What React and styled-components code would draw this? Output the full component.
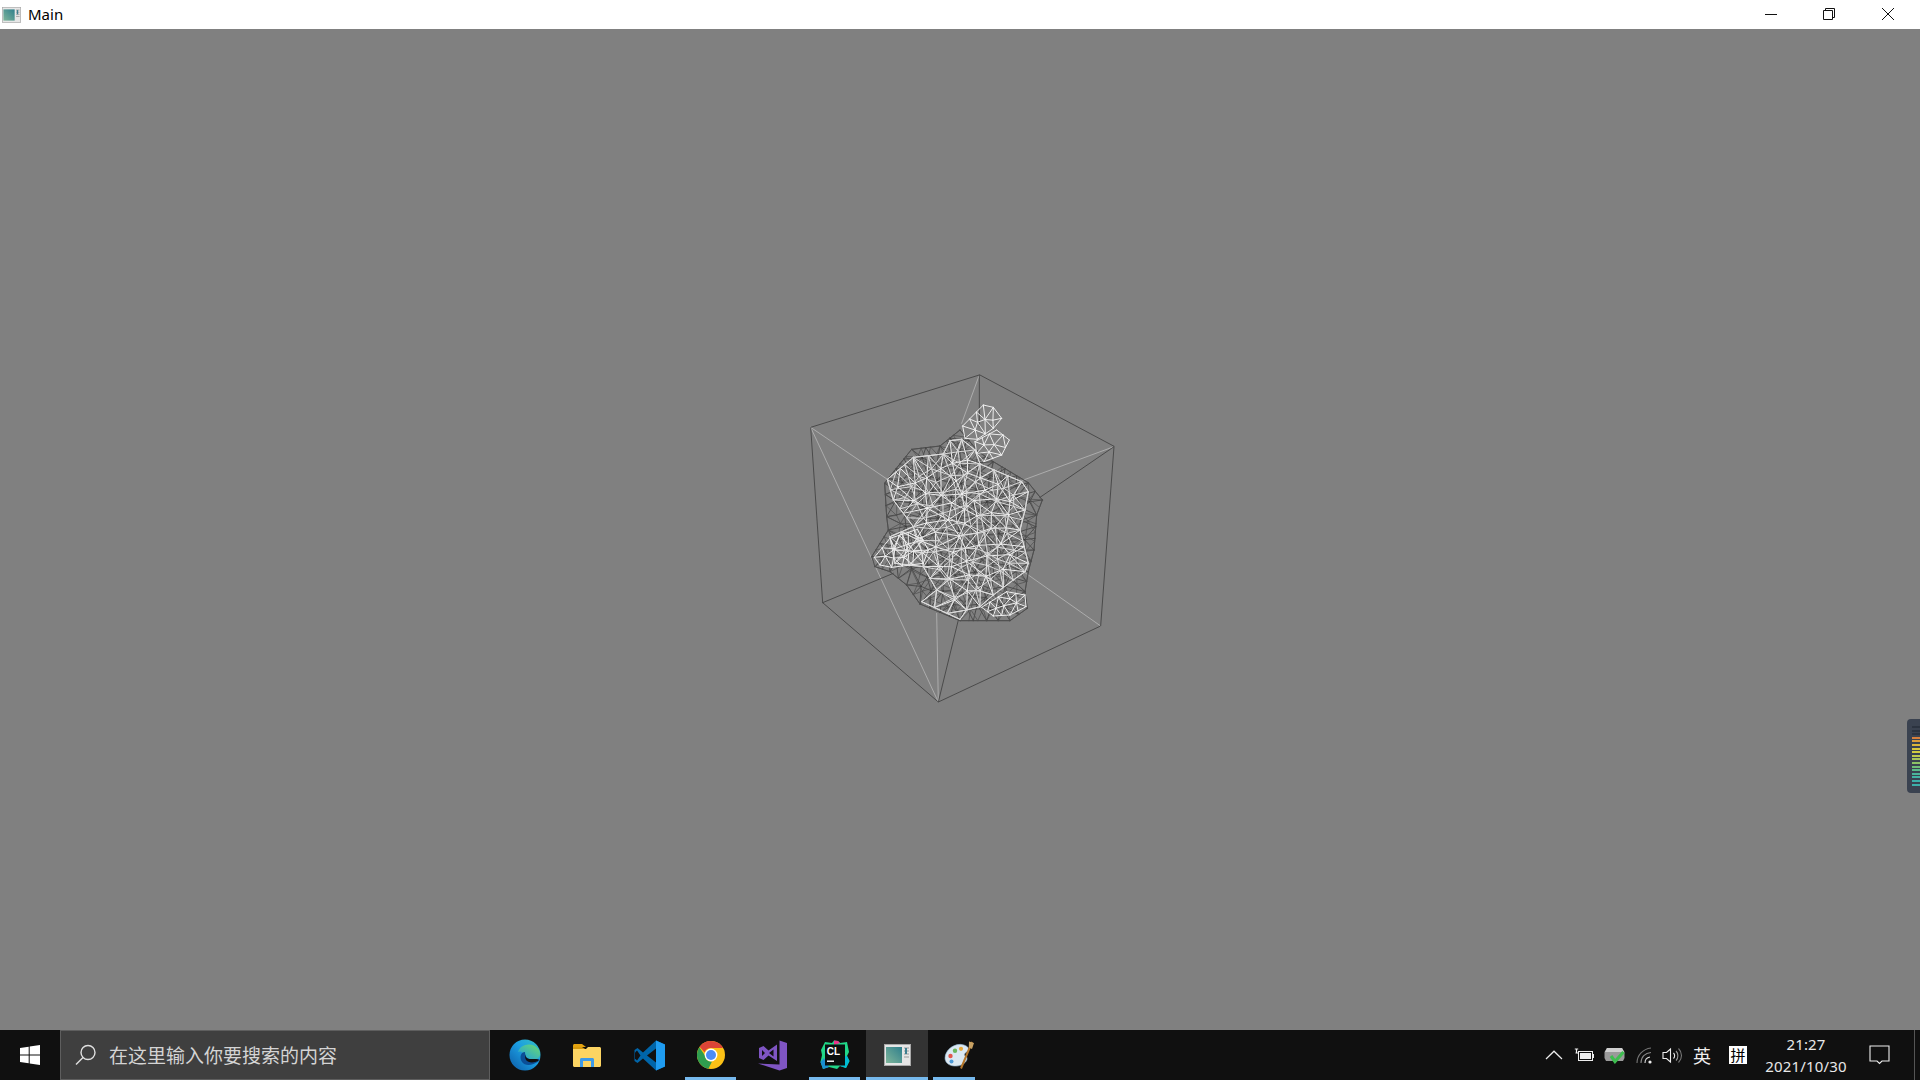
import React from 'react';
import styled, { createGlobalStyle } from 'styled-components';

const GlobalStyle = createGlobalStyle`
	html, body {
		margin: 0;
		padding: 0;
		background: #808080;
		overflow: hidden;
	}
`;

const UI_FONT = `"Noto Sans", "Noto Sans CJK SC", sans-serif`;

/**
 * Window frame
 */
const Page = styled.div`
	width: 1920px;
	height: 1080px;
	display: flex;
	flex-direction: column;
	position: relative;
	font-family: ${UI_FONT};
`;

const TitleBar = styled.div`
	height: 29px;
	flex: none;
	background: #fff;
	display: flex;
	align-items: center;
	padding-left: 2px;
	padding-right: 3px;
`;

const TitleText = styled.span`
	margin-left: 7px;
	font-size: 15px;
	color: #000;
	line-height: 29px;
`;

const WindowControls = styled.div`
	margin-left: auto;
	display: flex;
	height: 100%;
`;

const WindowButton = styled.div`
	width: 58.5px;
	display: flex;
	align-items: center;
	justify-content: center;
	padding-bottom: 2px;
	box-sizing: border-box;
`;

const Viewport = styled.div`
	flex: 1;
	background: #808080;
	display: flex;
	align-items: center;
	justify-content: center;
	padding-top: 11px;
`;

const MeshCanvas = styled.svg`
	display: block;
	width: 360px;
	height: 370px;
`;

const SideMeter = styled.div`
	position: absolute;
	right: 0;
	top: 719px;
	width: 13px;
	height: 74px;
	box-sizing: border-box;
	padding: 7px 0 0 5px;
	background: #3a4250;
	border-radius: 4px 0 0 4px;
	display: flex;
	flex-direction: column;
	gap: 1.6px;
`;

const MeterBar = styled.div`
	height: 2px;
	background: ${props => props.$color};
`;

/**
 * Taskbar
 */
const Taskbar = styled.div`
	height: 50px;
	flex: none;
	background: #101010;
	display: flex;
	color: #fff;
`;

const StartButton = styled.div`
	width: 60px;
	display: flex;
	align-items: center;
	justify-content: center;
`;

const SearchBox = styled.div`
	width: 430px;
	box-sizing: border-box;
	background: #3f3f3f;
	border: 1px solid #5e5e5e;
	display: flex;
	align-items: center;
	padding-left: 14px;
	padding-bottom: 1px;
	color: #d4d4d4;
	font-size: 19px;
	font-family: "Noto Sans CJK SC", sans-serif;
`;

const SearchText = styled.span`
	margin-left: 12px;
`;

const AppList = styled.div`
	display: flex;
	margin-left: 4px;
`;

const AppItem = styled.div`
	width: 62px;
	flex: none;
	position: relative;
	display: flex;
	align-items: center;
	justify-content: center;
	background: ${props => props.$active ? '#333' : 'transparent'};
`;

const RunningLine = styled.div`
	position: absolute;
	bottom: 0;
	left: ${props => props.$inset}px;
	right: ${props => props.$insetRight}px;
	height: 3px;
	background: #76b9ed;
`;

const Tray = styled.div`
	margin-left: auto;
	display: flex;
	align-items: center;
	height: 100%;
`;

const TraySlot = styled.div`
	width: ${props => props.$width}px;
	display: flex;
	align-items: center;
	justify-content: center;
	height: 100%;
`;

const ImeLabel = styled.span`
	font-family: "Noto Sans CJK SC", sans-serif;
	font-size: 18px;
	color: #eee;
`;

const ImeBox = styled.span`
	width: 18px;
	height: 18px;
	background: #fff;
	color: #000;
	font-family: "Noto Sans CJK SC", sans-serif;
	font-size: 15px;
	line-height: 18px;
	text-align: center;
`;

const Clock = styled.div`
	width: 96px;
	text-align: center;
	color: #e8e8e8;
	font-size: 15px;
	line-height: 22.5px;
	letter-spacing: 0.15px;
`;

const DesktopEdge = styled.div`
	width: 1px;
	height: 100%;
	margin-left: 10px;
	margin-right: 5px;
	background: #555;
`;

/**
 * Wireframe, in a coordinate system of 3 units per pixel
 */
const BODY_BACK = [[325, 385], [395, 298], [480, 288], [540, 240], [595, 305], [640, 335], [745, 398], [787, 450], [770, 495], [762, 600], [745, 665], [735, 725], [742, 775], [690, 812], [620, 812], [540, 812], [420, 762], [380, 705], [330, 665], [285, 650], [275, 620], [300, 580], [325, 540], [320, 500], [314, 400]];
const BODY_FRONT = [[322, 388], [400, 322], [490, 312], [510, 272], [545, 268], [585, 300], [600, 342], [725, 395], [745, 425], [735, 480], [720, 540], [745, 640], [735, 665], [700, 690], [640, 735], [600, 770], [560, 780], [540, 808], [425, 755], [470, 720], [430, 650], [345, 640], [330, 560], [400, 530], [340, 450]];
const EAR_TOP = [[548, 228], [610, 165], [640, 172], [665, 205], [640, 235], [592, 268], [555, 265]];
const EAR_LOW = [[585, 275], [650, 240], [688, 270], [665, 315], [612, 335], [590, 310]];
const PAW = [[283, 622], [330, 565], [412, 538], [445, 600], [430, 640], [335, 652], [300, 645]];
const FOOT = [[605, 772], [680, 725], [735, 735], [738, 770], [690, 795], [640, 798]];

function makeRandom(seed) {
	let s = seed;
	return () => {
		s = (s + 0x6d2b79f5) | 0;
		let t = Math.imul(s ^ (s >>> 15), 1 | s);
		t = (t + Math.imul(t ^ (t >>> 7), 61 | t)) ^ t;
		return ((t ^ (t >>> 14)) >>> 0) / 4294967296;
	};
}

function inside(poly, x, y) {
	let hit = false;
	for (let i = 0, j = poly.length - 1; i < poly.length; j = i++) {
		const [xi, yi] = poly[i];
		const [xj, yj] = poly[j];
		if ((yi > y) !== (yj > y) && x < ((xj - xi) * (y - yi)) / (yj - yi) + xi) hit = !hit;
	}
	return hit;
}

function inCircumcircle(p, a, b, c) {
	const ax = a[0] - p[0], ay = a[1] - p[1];
	const bx = b[0] - p[0], by = b[1] - p[1];
	const cx = c[0] - p[0], cy = c[1] - p[1];
	const det = (ax * ax + ay * ay) * (bx * cy - cx * by)
		- (bx * bx + by * by) * (ax * cy - cx * ay)
		+ (cx * cx + cy * cy) * (ax * by - bx * ay);
	const orient = (b[0] - a[0]) * (c[1] - a[1]) - (b[1] - a[1]) * (c[0] - a[0]);
	return orient > 0 ? det > 0 : det < 0;
}

// Bowyer-Watson, good enough for a couple of hundred points
function triangulate(points) {
	const all = points.concat([[-5000, -5000], [7000, -5000], [540, 7000]]);
	const n = points.length;
	let tris = [[n, n + 1, n + 2]];
	points.forEach((p, index) => {
		const bad = [];
		const good = [];
		tris.forEach((t) => {
			(inCircumcircle(p, all[t[0]], all[t[1]], all[t[2]]) ? bad : good).push(t);
		});
		const edges = {};
		bad.forEach((t) => {
			[[t[0], t[1]], [t[1], t[2]], [t[2], t[0]]].forEach(([a, b]) => {
				const key = a < b ? `${a},${b}` : `${b},${a}`;
				edges[key] = (edges[key] || 0) + 1;
			});
		});
		Object.keys(edges).forEach((key) => {
			if (edges[key] === 1) {
				const [a, b] = key.split(',').map(Number);
				good.push([a, b, index]);
			}
		});
		tris = good;
	});
	return tris.filter(t => t.every(i => i < n));
}

// random points inside an outline joined up into triangles
function meshPath(poly, spacing, seed) {
	const random = makeRandom(seed);
	const points = [];
	poly.forEach((a, i) => {
		const b = poly[(i + 1) % poly.length];
		const steps = Math.max(1, Math.round(Math.hypot(b[0] - a[0], b[1] - a[1]) / spacing));
		for (let s = 0; s < steps; s++) {
			points.push([a[0] + ((b[0] - a[0]) * s) / steps, a[1] + ((b[1] - a[1]) * s) / steps]);
		}
	});
	const xs = poly.map(p => p[0]);
	const ys = poly.map(p => p[1]);
	const minX = Math.min(...xs), maxX = Math.max(...xs);
	const minY = Math.min(...ys), maxY = Math.max(...ys);
	for (let tries = 0; tries < 4000; tries++) {
		const x = minX + random() * (maxX - minX);
		const y = minY + random() * (maxY - minY);
		if (!inside(poly, x, y)) continue;
		if (points.some(p => Math.hypot(p[0] - x, p[1] - y) < spacing * 0.85)) continue;
		points.push([x, y]);
	}
	const seen = {};
	let d = '';
	triangulate(points).forEach((t) => {
		const cx = (points[t[0]][0] + points[t[1]][0] + points[t[2]][0]) / 3;
		const cy = (points[t[0]][1] + points[t[1]][1] + points[t[2]][1]) / 3;
		if (!inside(poly, cx, cy)) return;
		[[t[0], t[1]], [t[1], t[2]], [t[2], t[0]]].forEach(([a, b]) => {
			const key = a < b ? `${a},${b}` : `${b},${a}`;
			if (seen[key]) return;
			seen[key] = true;
			d += `M${points[a][0].toFixed(1)} ${points[a][1].toFixed(1)}L${points[b][0].toFixed(1)} ${points[b][1].toFixed(1)}`;
		});
	});
	return d;
}

const BACK_LAYERS = [
	meshPath(BODY_BACK, 36, 11),
	meshPath(BODY_BACK, 30, 12),
];

const FRONT_LAYERS = [
	meshPath(BODY_FRONT, 44, 21),
	meshPath(BODY_FRONT, 40, 22),
];

const DETAIL_LAYERS = [
	meshPath(EAR_TOP, 28, 31),
	meshPath(EAR_LOW, 26, 32),
	meshPath(PAW, 30, 33),
	meshPath(FOOT, 26, 34),
];

const METER = ['#2b3340', '#2b3340', '#2b3340', '#d9803c', '#dc9c3a', '#dcb43a', '#d9c63c', '#d2cc40', '#bfca4c', '#a8c659', '#8cc265', '#6fbd78', '#58b98a', '#4bb59a', '#41b3a4', '#3cb0aa', '#3cb0aa'];

function BunnyMesh() {
	const dark = '#3c3c3c';
	const light = '#b8b8b8';
	return (
		<MeshCanvas viewBox="0 0 1080 1110" aria-hidden="true">
			<g fill="none" strokeLinecap="round" strokeLinejoin="round">
				{/* hidden edges of the box */}
				<path d="M598 75L545 220M92 232L325 390M1002 290L725 392M92 232L475 1056M475 1056L470 790M962 828L735 668" stroke={light} strokeWidth="2.4" />
				<path d="M598 75V230M1002 290L780 442M128 758L340 670M475 1056L535 810" stroke={dark} strokeWidth="2.4" />
				{/* far side of the model */}
				{BACK_LAYERS.map((d, i) => <path key={i} d={d} stroke={i === 1 ? '#505050' : '#3a3a3a'} strokeWidth="2.2" />)}
				{/* near side of the model */}
				{FRONT_LAYERS.map((d, i) => <path key={i} d={d} stroke={i === 1 ? '#d8d8d8' : '#f0f0f0'} strokeWidth="3" />)}
				{DETAIL_LAYERS.map((d, i) => <path key={i} d={d} stroke="#eeeeee" strokeWidth="3" />)}
				{/* visible edges of the box */}
				<path d="M598 75L92 232L128 758L475 1056L962 828L1002 290Z" stroke={dark} strokeWidth="2.4" />
			</g>
		</MeshCanvas>
	);
}

/**
 * Icons
 */
function WindowIcon({ width, height }) {
	return (
		<svg width={width} height={height} viewBox="0 0 27 22" style={{ display: 'block' }}>
			<defs>
				<linearGradient id="winPane" x1="0" y1="1" x2="1" y2="0">
					<stop offset="0" stopColor="#7fb59a" />
					<stop offset="1" stopColor="#2f7f8c" />
				</linearGradient>
			</defs>
			<rect x="0.5" y="0.5" width="26" height="21" fill="#e6e6e6" stroke="#a9a9a9" />
			<rect x="2" y="3" width="16" height="16" fill="url(#winPane)" />
			<path d="M20 4h5M20 7h5M20 10h5M20 13h5" stroke="#9a9a9a" strokeWidth="1.2" />
			<rect x="21" y="4" width="2" height="6" fill="#3f7f90" />
		</svg>
	);
}

function MinimizeIcon() {
	return <svg width="14" height="14" viewBox="0 0 14 14"><path d="M1 7.5H13" stroke="#111" fill="none" /></svg>;
}

function RestoreIcon() {
	return (
		<svg width="14" height="14" viewBox="0 0 14 14" fill="none" stroke="#111">
			<path d="M1.5 3.5H10.5V12.5H1.5Z" />
			<path d="M3.5 3.5V1.5H12.5V10.5H10.5" />
		</svg>
	);
}

function CloseIcon() {
	return <svg width="14" height="14" viewBox="0 0 14 14"><path d="M1 1L13 13M13 1L1 13" stroke="#111" fill="none" /></svg>;
}

function WindowsLogo() {
	return (
		<svg width="20" height="20" viewBox="0 0 20 20" fill="#fff">
			<path d="M0 3L8.7 1.7V9.5H0ZM9.7 1.6L20 0V9.5H9.7ZM0 10.5H8.7V18.3L0 17ZM9.7 10.5H20V20L9.7 18.4Z" />
		</svg>
	);
}

function SearchIcon() {
	return (
		<svg width="22" height="22" viewBox="0 0 22 22" fill="none" stroke="#e0e0e0" strokeWidth="1.4">
			<circle cx="13" cy="8.5" r="7" />
			<path d="M8 13.5L1 20.5" />
		</svg>
	);
}

function EdgeIcon() {
	return (
		<svg width="32" height="32" viewBox="0 0 32 32">
			<defs>
				<linearGradient id="edgeBase" x1="0" y1="1" x2="1" y2="0">
					<stop offset="0" stopColor="#0c59a4" />
					<stop offset="0.55" stopColor="#1b9de2" />
					<stop offset="1" stopColor="#35c1c1" />
				</linearGradient>
				<linearGradient id="edgeTop" x1="0" y1="1" x2="1" y2="0">
					<stop offset="0" stopColor="#1b9de2" />
					<stop offset="1" stopColor="#6ddb6d" />
				</linearGradient>
			</defs>
			<circle cx="16" cy="16" r="15.5" fill="url(#edgeBase)" />
			<path d="M9 13C11 5 24 2 30 11C32 15 31 19 27 20H15C16 14 12 11 9 13Z" fill="url(#edgeTop)" />
			<path d="M16 13C12 13 10 18 13 23C16 27 23 27 30 22V20H21C19 20 16 18 16 13Z" fill="#0b4f97" />
			<path d="M16 15.5C16.5 18.5 18.5 20 21 20H27C29 20 30 21 29 22C25 24 19 24 17 21C16 19 16 17 16 15.5Z" fill="#101010" />
		</svg>
	);
}

function FolderIcon() {
	return (
		<svg width="28" height="23" viewBox="0 0 28 23">
			<path d="M0 1.5C0 .7.7 0 1.5 0H9L13 3H0Z" fill="#e3a20f" />
			<path d="M0 3H9L13 5.5H0Z" fill="#d79a0d" />
			<path d="M0 5H13L15 3H26.5C27.3 3 28 3.7 28 4.5V21.5C28 22.3 27.3 23 26.5 23H1.5C.7 23 0 22.3 0 21.5Z" fill="#fcd462" />
			<path d="M7 23V15.5C7 14.7 7.7 14 8.5 14H19.5C20.3 14 21 14.7 21 15.5V23H18V17H10V23Z" fill="#3d9ae8" />
		</svg>
	);
}

function VsCodeIcon() {
	return (
		<svg width="31" height="31" viewBox="0 0 31 31">
			<path d="M22 0.5L31 4.5V26.5L22 30.5L9 18.5L3.5 23L0.5 21V10L3.5 8L9 12.5Z" fill="#0065a9" />
			<path d="M3 10.5L1 12.5V18.5L3 20.5L6.5 15.5Z" fill="#101010" />
			<path d="M22 0.5L31 4.5V26.5L22 30.5Z" fill="#1f9cf0" />
			<path d="M22 8.5V22.5L13 15.5Z" fill="#101010" />
		</svg>
	);
}

function ChromeIcon() {
	return (
		<svg width="28" height="28" viewBox="0 0 28 28">
			<circle cx="14" cy="14" r="14" fill="#fbc116" />
			<path d="M14 0A14 14 0 0 1 26.1 7H14A7 7 0 0 0 7.6 11.2L2.6 5.8A14 14 0 0 1 14 0Z" fill="#db4437" />
			<path d="M2.3 6.3L8 14.5A6 6 0 0 0 15 20.5L11.4 27.8A14 14 0 0 1 2.3 6.3Z" fill="#2f9e4f" />
			<circle cx="14" cy="14" r="6.4" fill="#fff" />
			<circle cx="14" cy="14" r="5" fill="#4c8bf5" />
		</svg>
	);
}

function VisualStudioIcon() {
	return (
		<svg width="30" height="31" viewBox="0 0 30 31">
			<path d="M21.5 0.5L29 3V28L21.5 30.5L0 23.5L21.5 24.5Z" fill="#7f55c3" />
			<path d="M1 8L5.5 6L10.5 10.5L19 4.5V21L10.5 15.5L5.5 20L1 18ZM4 10V16L7 13ZM11 13L15.5 16.5V9.5Z" fill="#7f55c3" fillRule="evenodd" />
		</svg>
	);
}

function ClionIcon() {
	return (
		<svg width="30" height="30" viewBox="0 0 30 30">
			<path d="M5 2L12 3L14 0.5L18 1L20 3L27 2L29 12L27 16L29.5 21L26 28L20 26L17 29L9 27L3 29L0.5 22L2 15L1 10Z" fill="#21d789" />
			<path d="M14 0.5L18 1L20 3L14 5Z" fill="#ed358c" />
			<path d="M27 16L29.5 21L26 28L20 26L24 16Z" fill="#00bcd4" />
			<path d="M0.5 22L3 29L9 27L4 18Z" fill="#1a8fd1" />
			<rect x="5" y="4.5" width="20" height="21" fill="#0a0f0d" />
			<text x="6.8" y="14.5" fill="#fff" fontFamily="Liberation Sans, sans-serif" fontWeight="700" fontSize="10">CL</text>
			<rect x="7" y="20.5" width="7" height="1.4" fill="#fff" />
		</svg>
	);
}

function PaletteIcon() {
	return (
		<svg width="31" height="31" viewBox="0 0 31 31">
			<path d="M1 18C1 10 11 2 20 5C25 6.5 26 10 22 12.5C19 14.5 21 16 22.5 17C25 20 19 27 10 26C4 25.5 1 22 1 18Z" fill="#dbe8f2" stroke="#8fb2cc" strokeWidth="0.6" />
			<circle cx="6.5" cy="16" r="2.2" fill="#e2574c" />
			<circle cx="11" cy="10.8" r="2.2" fill="#6cb65c" />
			<circle cx="17" cy="8.8" r="2.1" fill="#e8a93a" />
			<circle cx="7.5" cy="21.5" r="2" fill="#4c9ad8" />
			<path d="M28 2L17 28.5" stroke="#b5772c" strokeWidth="2" />
			<path d="M25 1.5L30 3L28 9L24.8 7.6Z" fill="#c8a163" />
		</svg>
	);
}

function ChevronIcon() {
	return <svg width="18" height="10" viewBox="0 0 18 10"><path d="M1 9L9 1.2L17 9" fill="none" stroke="#eee" strokeWidth="1.2" /></svg>;
}

function BatteryIcon() {
	return (
		<svg width="20" height="14" viewBox="0 0 20 14" fill="none" stroke="#eee">
			<rect x="4.5" y="3.5" width="14" height="9" />
			<rect x="6" y="5" width="11" height="6" fill="#eee" stroke="none" />
			<path d="M19.5 6V10M1.5 5H4.5M2.5 1V5M.8 1H4.2" strokeWidth="1.2" />
		</svg>
	);
}

function SecurityIcon() {
	return (
		<svg width="21" height="17" viewBox="0 0 21 17">
			<path d="M3 1H18L20.5 5V11L19 14H2L.5 11V5Z" fill="#9a9a9a" />
			<path d="M3 1H18L20 5H1Z" fill="#cfcfcf" />
			<path d="M7 9L11 14.5L19.5 5" fill="none" stroke="#3dbd4f" strokeWidth="3.2" />
		</svg>
	);
}

function WifiIcon() {
	return (
		<svg width="16" height="17" viewBox="0 0 16 17" fill="none" strokeWidth="1.1">
			<path d="M1 16C1 8 7 2 15 1" stroke="#777" />
			<path d="M5 16C5 10 9 6 15 5.5" stroke="#888" />
			<path d="M9 16C9 12.5 11 10.5 14 10" stroke="#dcdcdc" />
			<circle cx="14" cy="15" r="1.6" fill="#eee" stroke="none" />
		</svg>
	);
}

function VolumeIcon() {
	return (
		<svg width="21" height="17" viewBox="0 0 21 17" fill="none" stroke="#eee" strokeWidth="1.1">
			<path d="M1 5.5H4.5L8.5 2V15L4.5 11.5H1Z" />
			<path d="M11.5 6C13 7.5 13 10 11.5 11.5" />
			<path d="M14 4C16.5 6.5 16.5 11 14 13.5" stroke="#999" />
			<path d="M16.5 1.5C20.5 5.5 20.5 11.5 16.5 15.5" stroke="#777" />
		</svg>
	);
}

function NotificationIcon() {
	return (
		<svg width="21" height="20" viewBox="0 0 21 20" fill="none" stroke="#eee" strokeWidth="1.1">
			<path d="M1 1H20V16H13L10.5 18.5L8 16H1Z" />
		</svg>
	);
}

const APPS = [
	{ key: 'edge', icon: <EdgeIcon /> },
	{ key: 'files', icon: <FolderIcon /> },
	{ key: 'code', icon: <VsCodeIcon /> },
	{ key: 'chrome', icon: <ChromeIcon />, line: [5, 6] },
	{ key: 'vs', icon: <VisualStudioIcon /> },
	{ key: 'clion', icon: <ClionIcon />, line: [5, 6] },
	{ key: 'main', icon: <WindowIcon width={27} height={22} />, line: [0, 0], active: true },
	{ key: 'paint', icon: <PaletteIcon />, line: [5, 15] },
];

export default function App() {
	return (
		<Page>
			<GlobalStyle />
			<TitleBar>
				<WindowIcon width={19} height={16} />
				<TitleText>Main</TitleText>
				<WindowControls>
					<WindowButton><MinimizeIcon /></WindowButton>
					<WindowButton><RestoreIcon /></WindowButton>
					<WindowButton><CloseIcon /></WindowButton>
				</WindowControls>
			</TitleBar>
			<Viewport>
				<BunnyMesh />
			</Viewport>
			<SideMeter>
				{METER.map((color, i) => <MeterBar key={i} $color={color} />)}
			</SideMeter>
			<Taskbar>
				<StartButton><WindowsLogo /></StartButton>
				<SearchBox>
					<SearchIcon />
					<SearchText>在这里输入你要搜索的内容</SearchText>
				</SearchBox>
				<AppList>
					{APPS.map((app) => (
						<AppItem key={app.key} $active={app.active}>
							{app.icon}
							{app.line && <RunningLine $inset={app.line[0]} $insetRight={app.line[1]} />}
						</AppItem>
					))}
				</AppList>
				<Tray>
					<TraySlot $width={30}><ChevronIcon /></TraySlot>
					<TraySlot $width={30}><BatteryIcon /></TraySlot>
					<TraySlot $width={30}><SecurityIcon /></TraySlot>
					<TraySlot $width={30}><WifiIcon /></TraySlot>
					<TraySlot $width={27}><VolumeIcon /></TraySlot>
					<TraySlot $width={32}><ImeLabel>英</ImeLabel></TraySlot>
					<TraySlot $width={40}><ImeBox>拼</ImeBox></TraySlot>
					<Clock>
						<div>21:27</div>
						<div>2021/10/30</div>
					</Clock>
					<TraySlot $width={50}><NotificationIcon /></TraySlot>
					<DesktopEdge />
				</Tray>
			</Taskbar>
		</Page>
	);
}
